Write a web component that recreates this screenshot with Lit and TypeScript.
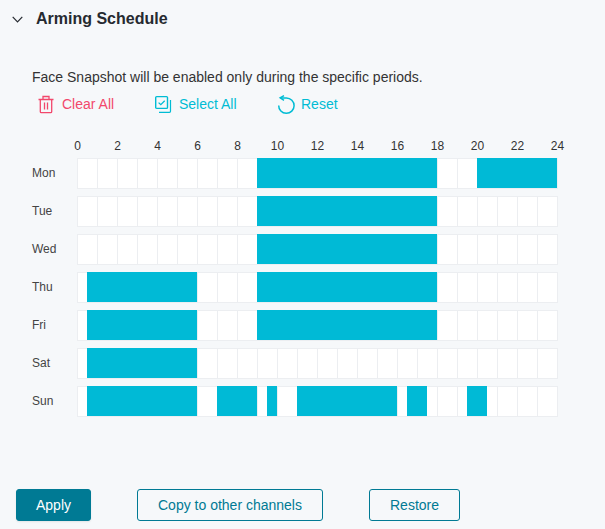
import { LitElement, html, css, svg } from "lit";
import { customElement } from "lit/decorators.js";

type Day = { name: string; on: [number, number][] };
const DAYS: Day[] = [
  { name: "Mon", on: [[9, 18], [20, 24]] },
  { name: "Tue", on: [[9, 18]] },
  { name: "Wed", on: [[9, 18]] },
  { name: "Thu", on: [[0.5, 6], [9, 18]] },
  { name: "Fri", on: [[0.5, 6], [9, 18]] },
  { name: "Sat", on: [[0.5, 6]] },
  { name: "Sun", on: [[0.5, 6], [7, 9], [9.5, 10], [11, 16], [16.5, 17.5], [19.5, 20.5]] },
];
const HOURS = Array.from({ length: 13 }, (_, i) => i * 2);
const CELLS = Array.from({ length: 24 });

@customElement("app-root")
export class AppRoot extends LitElement {
  static styles = css`
    :host {
      width: 605px;
      height: 529px;
      overflow: hidden;
      box-sizing: border-box;
      background: #f6f8fa;
      font-family: "Liberation Sans", Arial, sans-serif;
      color: #303133;
      display: flex;
      flex-direction: column;
    }
    .head {
      display: flex;
      align-items: center;
      height: 20px;
      margin-top: 9px;
      padding-left: 12px;
      gap: 13px;
    }
    .chev { width: 11px; height: 7px; display: block; }
    .title { font-size: 16px; font-weight: 700; color: #262a30; }
    .note {
      margin: 39px 0 0 32px;
      font-size: 14px;
      line-height: 18px;
      color: #333;
    }
    .tools {
      display: flex;
      align-items: center;
      height: 20px;
      margin: 8px 0 0 38px;
      font-size: 14px;
    }
    .tool { display: flex; align-items: center; gap: 7px; }
    .tool svg { display: block; width: 17px; height: 18px; overflow: visible; }
    .tool.red { color: #f2486c; width: 117px; }
    .tool.cyan { color: #00bcd4; }
    .tool.sel { width: 122px; }
    .chart { margin: 25px 0 0 32px; }
    .hours {
      position: relative;
      height: 14px;
      margin-left: 45.5px;
      font-size: 12px;
      line-height: 14px;
      color: #333;
      display: grid;
      grid-template-columns: repeat(12, 40px) 0;
      margin-bottom: 5px;
    }
    .hours span { width: 0; display: flex; justify-content: center; white-space: nowrap; }
    .row { display: flex; align-items: flex-start; height: 31px; margin-bottom: 7px; }
    .day { width: 45px; font-size: 12px; line-height: 30px; color: #444; }
    .track {
      position: relative;
      display: flex;
      width: 481px;
      height: 31px;
      box-sizing: border-box;
      background: #fff;
      border-right: 1px solid #eceef1;
      border-bottom: 1px solid #eceef1;
      border-top: 1px solid #eceef1;
    }
    .cell { width: 20px; box-sizing: border-box; border-left: 1px solid #eceef1; }
    .seg { position: absolute; top: -1px; height: 30px; background: #00bad6; }
    .actions {
      display: flex;
      margin: 65px 0 0 16px;
      font-size: 14px;
    }
    button {
      height: 32px;
      box-sizing: border-box;
      border-radius: 3px;
      border: 1px solid #007a94;
      background: transparent;
      color: #007a94;
      font: inherit;
      padding: 0;
    }
    .apply { width: 75px; background: #007a94; color: #fff; margin-right: 46px; box-shadow: 0 1px 2px rgba(0,0,0,.08); }
    .copy { width: 186px; margin-right: 46px; }
    .restore { width: 91px; }
  `;

  private trash = svg`<path d="M.5 4.5h15M5 4.5v-3h6v3M2.3 4.5v12.2a1 1 0 0 0 1 1h9.4a1 1 0 0 0 1-1V4.5M6.5 7.5v7M9.5 7.5v7" fill="none" stroke="currentColor" stroke-width="1.3"/>`;
  private select = svg`<rect x=".7" y="1.6" width="11.8" height="11.8" rx="1" fill="none" stroke="currentColor" stroke-width="1.4"/><path d="M3.6 7.6l2.2 2.1 3.9-3.9" fill="none" stroke="currentColor" stroke-width="1.3"/><path d="M15.5 5v11.3a1 1 0 0 1-1 1H4" fill="none" stroke="currentColor" stroke-width="1.2"/>`;
  private reset = svg`<path d="M3.6 2.9h5.8a7.7 7.7 0 1 1-7.7 7.5" fill="none" stroke="currentColor" stroke-width="1.5"/><path d="M7 .7L3.2 2.9 7 5.3" fill="none" stroke="currentColor" stroke-width="1.5"/>`;

  render() {
    return html`
      <div class="head">
        <svg class="chev" viewBox="0 0 11 7"><path d="M.7.8l4.8 5 4.8-5" fill="none" stroke="#262a30" stroke-width="1.2"/></svg>
        <span class="title">Arming Schedule</span>
      </div>
      <div class="note">Face Snapshot will be enabled only during the specific periods.</div>
      <div class="tools">
        <div class="tool red"><svg viewBox="0 0 17 18">${this.trash}</svg>Clear All</div>
        <div class="tool cyan sel"><svg viewBox="0 0 17 18">${this.select}</svg>Select All</div>
        <div class="tool cyan"><svg viewBox="0 0 17 18">${this.reset}</svg>Reset</div>
      </div>
      <div class="chart">
        <div class="hours">${HOURS.map((h) => html`<span>${h}</span>`)}</div>
        ${DAYS.map(
          (d) => html`<div class="row">
            <div class="day">${d.name}</div>
            <div class="track">
              ${CELLS.map(() => html`<div class="cell"></div>`)}
              ${d.on.map(
                ([a, b]) =>
                  html`<div class="seg" style="left:${a * 20}px;width:${(b - a) * 20}px"></div>`
              )}
            </div>
          </div>`
        )}
      </div>
      <div class="actions">
        <button class="apply">Apply</button>
        <button class="copy">Copy to other channels</button>
        <button class="restore">Restore</button>
      </div>
    `;
  }
}
